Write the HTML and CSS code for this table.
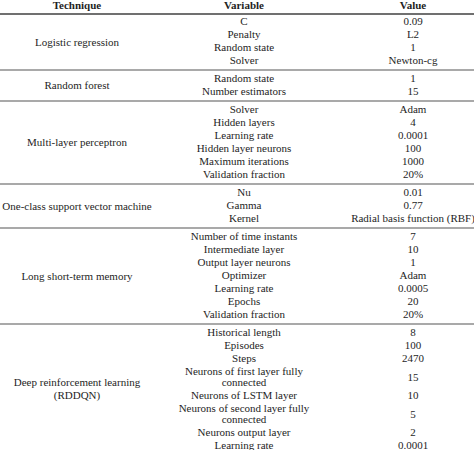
FILE: index.html
```html
<!DOCTYPE html>
<html>
<head>
<meta charset="utf-8">
<link rel="stylesheet" href="styles.css">
</head>
<body>
<table class="tbl">
  <colgroup><col class="c1"><col class="c2"><col class="c3"></colgroup>
  <thead>
    <tr><th>Technique</th><th>Variable</th><th>Value</th></tr>
  </thead>
  <tbody>
    <tr class="first"><td class="tech" rowspan="4">Logistic regression</td><td>C</td><td>0.09</td></tr>
    <tr><td>Penalty</td><td>L2</td></tr>
    <tr><td>Random state</td><td>1</td></tr>
    <tr class="last"><td>Solver</td><td>Newton-cg</td></tr>
  </tbody>
  <tbody>
    <tr class="first"><td class="tech" rowspan="2">Random forest</td><td>Random state</td><td>1</td></tr>
    <tr class="last"><td>Number estimators</td><td>15</td></tr>
  </tbody>
  <tbody>
    <tr class="first"><td class="tech" rowspan="6">Multi-layer perceptron</td><td>Solver</td><td>Adam</td></tr>
    <tr><td>Hidden layers</td><td>4</td></tr>
    <tr><td>Learning rate</td><td>0.0001</td></tr>
    <tr><td>Hidden layer neurons</td><td>100</td></tr>
    <tr><td>Maximum iterations</td><td>1000</td></tr>
    <tr class="last"><td>Validation fraction</td><td>20%</td></tr>
  </tbody>
  <tbody>
    <tr class="first"><td class="tech" rowspan="3">One-class support vector machine</td><td>Nu</td><td>0.01</td></tr>
    <tr><td>Gamma</td><td>0.77</td></tr>
    <tr class="last"><td>Kernel</td><td>Radial basis function (RBF)</td></tr>
  </tbody>
  <tbody>
    <tr class="first"><td class="tech" rowspan="7">Long short-term memory</td><td>Number of time instants</td><td>7</td></tr>
    <tr><td>Intermediate layer</td><td>10</td></tr>
    <tr><td>Output layer neurons</td><td>1</td></tr>
    <tr><td>Optimizer</td><td>Adam</td></tr>
    <tr><td>Learning rate</td><td>0.0005</td></tr>
    <tr><td>Epochs</td><td>20</td></tr>
    <tr class="last"><td>Validation fraction</td><td>20%</td></tr>
  </tbody>
  <tbody>
    <tr class="first"><td class="tech" rowspan="8">Deep reinforcement learning<br>(RDDQN)</td><td>Historical length</td><td>8</td></tr>
    <tr><td>Episodes</td><td>100</td></tr>
    <tr><td>Steps</td><td>2470</td></tr>
    <tr><td class="wrap">Neurons of first layer fully connected</td><td>15</td></tr>
    <tr><td>Neurons of LSTM layer</td><td>10</td></tr>
    <tr><td class="wrap">Neurons of second layer fully connected</td><td>5</td></tr>
    <tr><td>Neurons output layer</td><td>2</td></tr>
    <tr><td>Learning rate</td><td>0.0001</td></tr>
  </tbody>
</table>
</body>
</html>
```
FILE: styles.css
```css
html, body {
  margin: 0;
  padding: 0;
  overflow: hidden;
  background: #fff;
}
body {
  font-family: "Liberation Serif", "Times New Roman", "DejaVu Serif", serif;
  font-size: 11px;
  color: #1e1e1e;
}
.tbl {
  border-collapse: collapse;
  table-layout: fixed;
  width: 504px;
  margin-left: -6px;
  margin-top: -1px;
}
.c1 { width: 166px; }
.c2 { width: 168px; }
.c3 { width: 170px; }
.tbl th {
  font-weight: bold;
  line-height: 13px;
  padding: 0 0 1px 0;
  text-align: center;
  border-bottom: 2px solid #707070;
  white-space: nowrap;
}
.tbl td {
  line-height: 13px;
  padding: 0 4px;
  text-align: center;
  vertical-align: middle;
  white-space: nowrap;
}
.tbl td.wrap {
  white-space: normal;
  line-height: 11px;
  padding: 1px 16px;
}
.tbl tbody {
  border-top: 2px solid #a9a9a9;
}
.tbl thead + tbody {
  border-top: none;
}
.tbl tr.first td {
  padding-top: 1px;
}
.tbl thead + tbody tr.first td {
  padding-top: 0;
}
.tbl tr.last td {
  padding-bottom: 2px;
}
.tbl tr.first td.tech {
  padding-top: 0;
}
```
